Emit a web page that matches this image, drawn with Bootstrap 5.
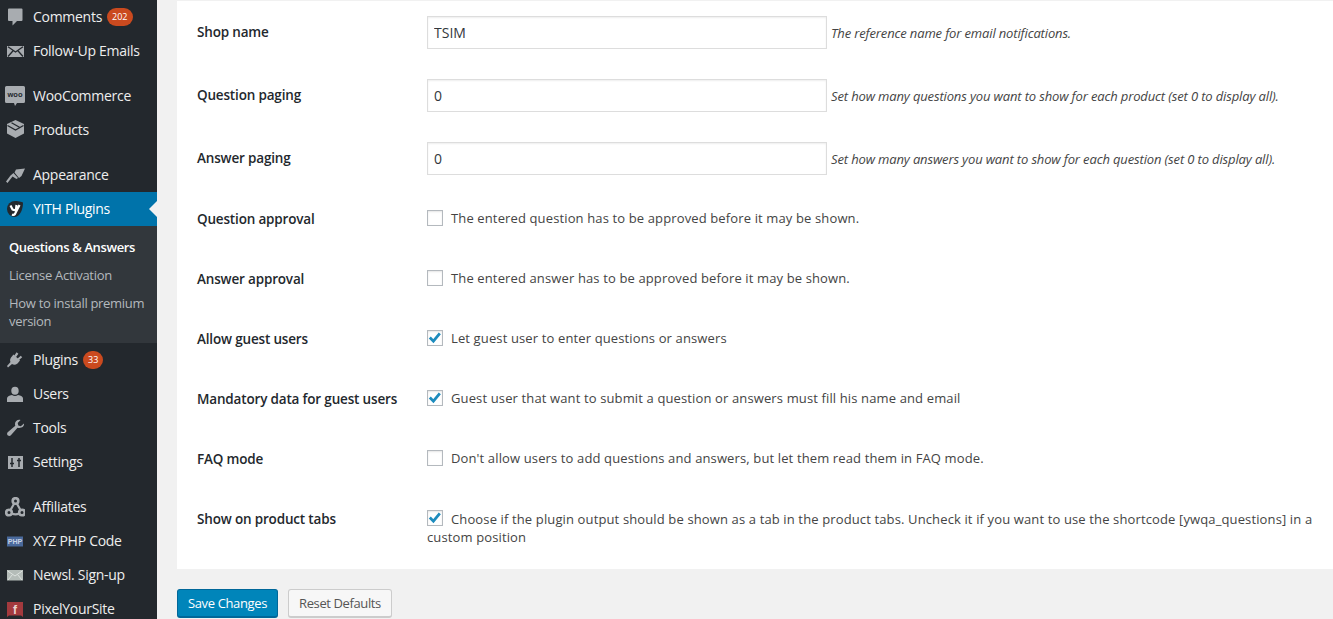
<!DOCTYPE html>
<html lang="en">
<head>
<meta charset="utf-8">
<title>Questions &amp; Answers settings</title>
<link href="https://cdn.jsdelivr.net/npm/bootstrap@5.3.0/dist/css/bootstrap.min.css" rel="stylesheet">
<style>
html,body{height:619px;overflow:hidden}
body{background:#f1f1f1;font-family:"Open Sans","Noto Sans",sans-serif;font-size:13px;color:#444;line-height:18px;letter-spacing:.13px}
.wp-shell{height:619px;overflow:hidden}
.wp-side{width:157px;flex:none;background:#23282d;color:#eee;font-size:14px;letter-spacing:-.28px}
.wp-item{height:34px;color:#eee;text-decoration:none;padding-left:33px;position:relative}
.wp-ico{position:absolute;left:5px;top:7px;width:20px;height:20px;fill:#a8acb0}
.wp-cut{fill:none;stroke:#23282d;stroke-width:1.3}
.wp-glyph{font-family:"Liberation Sans",sans-serif;font-weight:700;letter-spacing:0}
.wp-gap{height:11px}
.wp-count{background:#ca4a1f;color:#fff;font-size:9px;line-height:17px;height:18px;min-width:18px;padding:0 5px;border-radius:9px;margin-left:5px;letter-spacing:0}
.wp-active{background:#0073aa;color:#fff;position:relative}
.wp-active::after{content:"";position:absolute;right:0;top:9px;border:8px solid transparent;border-right-color:#f1f1f1;border-left:0}
.wp-sub{background:#32373c;padding:7px 0 8px}
.wp-sub a{display:block;padding:5px 9px;color:#b4b9be;text-decoration:none;font-size:13px;line-height:18px;letter-spacing:-.3px}
.wp-sub a.wp-cur{color:#fff;font-weight:600;letter-spacing:-.38px}
.wp-main{padding-left:20px;min-width:0}
.wp-panel{background:#fff;margin-top:1px;height:568px;padding-left:20px;padding-right:10px}
.wp-row{display:flex}
.wp-row-input{height:63px;align-items:center}
.wp-row-check{height:60px;padding-top:20px}
.wp-row-last{height:79px}
.wp-th{width:230px;flex:none;color:#23282d;font-weight:600;font-size:13.5px;letter-spacing:-.17px}
.wp-row-input .wp-th{margin-top:-2px}
.wp-input{width:400px;height:33px;flex:none;border:1px solid #ddd;border-radius:0;padding:0 6px;font-size:14px;color:#32373c;box-shadow:inset 0 1px 2px rgba(0,0,0,.07)}
.wp-desc{font-style:italic;font-size:13px;margin-left:4px;white-space:nowrap;letter-spacing:-.14px}
.wp-check-label{display:block;padding-right:8px;margin-top:-1px}
.wp-row-last .wp-check-label{margin-top:0}
.form-check-input.wp-check{width:16px;height:16px;margin:0 8px 0 0;vertical-align:-3px;border:1px solid #b4b9be;border-radius:0;box-shadow:inset 0 1px 2px rgba(0,0,0,.1)}
.wp-row-last .form-check-input.wp-check{vertical-align:-2px}
.form-check-input.wp-check:checked{background-color:#fff;border-color:#b4b9be;background-size:16px 16px;background-image:url("data:image/svg+xml,%3Csvg xmlns='http://www.w3.org/2000/svg' viewBox='0 0 16 16'%3E%3Cpath fill='none' stroke='%231e8cbe' stroke-width='2.8' d='M2.800 7.600 6.400 11.200 12.800 3.400'/%3E%3C/svg%3E")}
.wp-actions{padding-top:20px;gap:10px}
.wp-save{background:#0085ba;border:1px solid #006799;border-bottom-width:2px;color:#fff;height:29px;padding:0 10px;font-size:13px;border-radius:3px;line-height:26px;letter-spacing:-.37px}
.wp-reset{background:#f7f7f7;border:1px solid #ccc;border-bottom-width:2px;color:#555;height:29px;padding:0 10px;font-size:13px;border-radius:3px;line-height:26px;letter-spacing:-.38px}
</style>
</head>
<body>
<div class="d-flex wp-shell">
<nav class="wp-side">
  <a class="wp-item d-flex align-items-center" href="#"><svg class="wp-ico" viewBox="0 0 20 20"><path d="M4 1.500h12.500a1 1 0 0 1 1 1V13a1 1 0 0 1-1 1H12l-4.500 4.500V14H4a1 1 0 0 1-1-1V2.500a1 1 0 0 1 1-1z"/></svg>Comments<span class="wp-count">202</span></a>
  <a class="wp-item d-flex align-items-center" href="#"><svg class="wp-ico" viewBox="0 0 20 20"><rect x="2" y="5" width="17" height="11"/><path class="wp-cut" d="M3 5.800 10.500 11 18 5.800M3 15.500 8.300 9.500M18 15.500 12.700 9.500"/></svg>Follow-Up Emails</a>
  <div class="wp-gap"></div>
  <a class="wp-item d-flex align-items-center" href="#"><svg class="wp-ico" viewBox="0 0 20 20"><path d="M1.500 0h17A1.500 1.500 0 0 1 20 1.500v14a1.500 1.500 0 0 1-1.500 1.500H12l-2 3-1-3H1.500A1.500 1.500 0 0 1 0 15.500v-14A1.500 1.500 0 0 1 1.500 0z"/><text class="wp-glyph" x="10" y="11" font-size="7.500" text-anchor="middle" fill="#23282d">woo</text></svg>WooCommerce</a>
  <a class="wp-item d-flex align-items-center" href="#"><svg class="wp-ico" viewBox="0 0 20 20"><path d="M10.500 0 19 4v9.500L10.500 18 2 13.500V4z"/><path class="wp-cut" d="M2.500 5.500 10.500 10 18.500 5.500M6.500 2.800 14.500 7.300"/></svg>Products</a>
  <div class="wp-gap"></div>
  <a class="wp-item d-flex align-items-center" href="#"><svg class="wp-ico" viewBox="0 0 20 20"><path d="M11 4.500 20 3.500 16.500 11 14 13 9.500 7.500zM8.500 8 13 13 11.500 14 7.500 11.500 2.500 18 1 16.500 5.500 10.500z"/></svg>Appearance</a>
  <a class="wp-item wp-active d-flex align-items-center" href="#"><svg class="wp-ico" viewBox="0 0 20 20"><path fill="#23282d" d="M10 2c4.500 0 8 1.500 8 1.500 0 8-3.500 14-8 14.500a8 8 0 0 1 0-16z"/><path fill="none" stroke="#fff" stroke-width="2.200" d="M5.500 6.500 7.500 10.500c1.500.8 3 .6 3.500-.3l.5-4.200M14.500 6 10 15c-.8 1-2 1-3 .5"/></svg>YITH Plugins</a>
  <div class="wp-sub">
    <a class="wp-cur" href="#">Questions &amp; Answers</a>
    <a href="#">License Activation</a>
    <a href="#">How to install premium version</a>
  </div>
  <a class="wp-item d-flex align-items-center" href="#"><svg class="wp-ico" viewBox="0 0 20 20"><path d="M8.500 4.500 15 10.500 12.500 13.500C10.500 15 8.500 15 7 14L3 17.500 2 16 5.500 12C4.800 10.500 5 9 6 7.500z"/><path fill="none" stroke="#a8acb0" stroke-width="2.200" d="M10 6.500 12.500 3M13 9.500 16.500 6.500"/></svg>Plugins<span class="wp-count">33</span></a>
  <a class="wp-item d-flex align-items-center" href="#"><svg class="wp-ico" viewBox="0 0 20 20"><ellipse cx="10" cy="6.800" rx="3.700" ry="4"/><path d="M2 18v-3.500C2 12.500 4 11.500 7 11c1.800 1.200 4.200 1.200 6 0 3 .5 5 1.500 5 3.500V18z"/></svg>Users</a>
  <a class="wp-item d-flex align-items-center" href="#"><svg class="wp-ico" viewBox="0 0 20 20"><path d="M19 5.500 15.800 8.300 13.300 7.500 12.700 5 15.500 2C12.500 1.300 10 3.300 10 6c0 .7.100 1.200.3 1.700L2.700 14.300C1.700 15.300 2 17 3 17.600c1 .7 2.300.4 3.100-.5L12.500 9.700C16.500 10.500 19.500 8.500 19 5.500z"/></svg>Tools</a>
  <a class="wp-item d-flex align-items-center" href="#"><svg class="wp-ico" viewBox="0 0 20 20"><rect x="3" y="4" width="15" height="13"/><path fill="none" stroke="#23282d" stroke-width="1.500" d="M7 6v9M5 11.500h4M14 6v9M12 8.500h4"/></svg>Settings</a>
  <div class="wp-gap"></div>
  <a class="wp-item d-flex align-items-center" href="#"><svg class="wp-ico" viewBox="0 0 20 20"><g fill="none" stroke="#a8acb0" stroke-width="2.600"><circle cx="10.500" cy="4" r="2.800"/><circle cx="4" cy="15.500" r="2.800"/><circle cx="17" cy="15.500" r="2.800"/><path stroke-width="2.200" d="M9.200 6.500 5.500 13M11.800 6.500 15.500 13M6.800 16.500c2.200 1 5.200 1 7.400 0"/></g></svg>Affiliates</a>
  <a class="wp-item d-flex align-items-center" href="#"><svg class="wp-ico" viewBox="0 0 20 20"><rect x="2" y="5.500" width="16" height="10" fill="#4a6a9c"/><text class="wp-glyph" x="10" y="13.300" font-size="7" text-anchor="middle" fill="#c8d3e4">PHP</text></svg>XYZ PHP Code</a>
  <a class="wp-item d-flex align-items-center" href="#"><svg class="wp-ico" viewBox="0 0 20 20"><rect x="2" y="5" width="16" height="10.500" fill="#b4bcb8"/><path fill="none" stroke="#dde2df" stroke-width="1" d="M2.500 5.800 10 11 17.500 5.800M3 15 7.500 9.500M17 15 12.500 9.500"/></svg>Newsl. Sign-up</a>
  <a class="wp-item d-flex align-items-center" href="#"><svg class="wp-ico" viewBox="0 0 20 20"><path fill="#a33a3e" d="M2 3h16v15l-2-1.500H4L2 18z"/><text class="wp-glyph" x="10" y="14.500" font-size="12" text-anchor="middle" fill="#ecd6d2">f</text></svg>PixelYourSite</a>
</nav>
<main class="wp-main flex-grow-1">
  <form>
  <div class="wp-panel">
    <div class="wp-row wp-row-input"><div class="wp-th">Shop name</div><input class="form-control wp-input" value="TSIM"><span class="wp-desc">The reference name for email notifications.</span></div>
    <div class="wp-row wp-row-input"><div class="wp-th">Question paging</div><input class="form-control wp-input" value="0"><span class="wp-desc">Set how many questions you want to show for each product (set 0 to display all).</span></div>
    <div class="wp-row wp-row-input"><div class="wp-th">Answer paging</div><input class="form-control wp-input" value="0"><span class="wp-desc">Set how many answers you want to show for each question (set 0 to display all).</span></div>
    <div class="wp-row wp-row-check"><div class="wp-th">Question approval</div><label class="wp-check-label"><input class="form-check-input wp-check" type="checkbox">The entered question has to be approved before it may be shown.</label></div>
    <div class="wp-row wp-row-check"><div class="wp-th">Answer approval</div><label class="wp-check-label"><input class="form-check-input wp-check" type="checkbox">The entered answer has to be approved before it may be shown.</label></div>
    <div class="wp-row wp-row-check"><div class="wp-th">Allow guest users</div><label class="wp-check-label"><input class="form-check-input wp-check" type="checkbox" checked>Let guest user to enter questions or answers</label></div>
    <div class="wp-row wp-row-check"><div class="wp-th">Mandatory data for guest users</div><label class="wp-check-label"><input class="form-check-input wp-check" type="checkbox" checked>Guest user that want to submit a question or answers must fill his name and email</label></div>
    <div class="wp-row wp-row-check"><div class="wp-th">FAQ mode</div><label class="wp-check-label"><input class="form-check-input wp-check" type="checkbox">Don't allow users to add questions and answers, but let them read them in FAQ mode.</label></div>
    <div class="wp-row wp-row-check wp-row-last"><div class="wp-th">Show on product tabs</div><label class="wp-check-label"><input class="form-check-input wp-check" type="checkbox" checked>Choose if the plugin output should be shown as a tab in the product tabs. Uncheck it if you want to use the shortcode [ywqa_questions] in a custom position</label></div>
  </div>
  <div class="d-flex wp-actions">
    <button type="button" class="btn wp-save">Save Changes</button>
    <button type="button" class="btn wp-reset">Reset Defaults</button>
  </div>
  </form>
</main>
</div>
<script src="https://cdn.jsdelivr.net/npm/bootstrap@5.3.0/dist/js/bootstrap.bundle.min.js"></script>
</body>
</html>
